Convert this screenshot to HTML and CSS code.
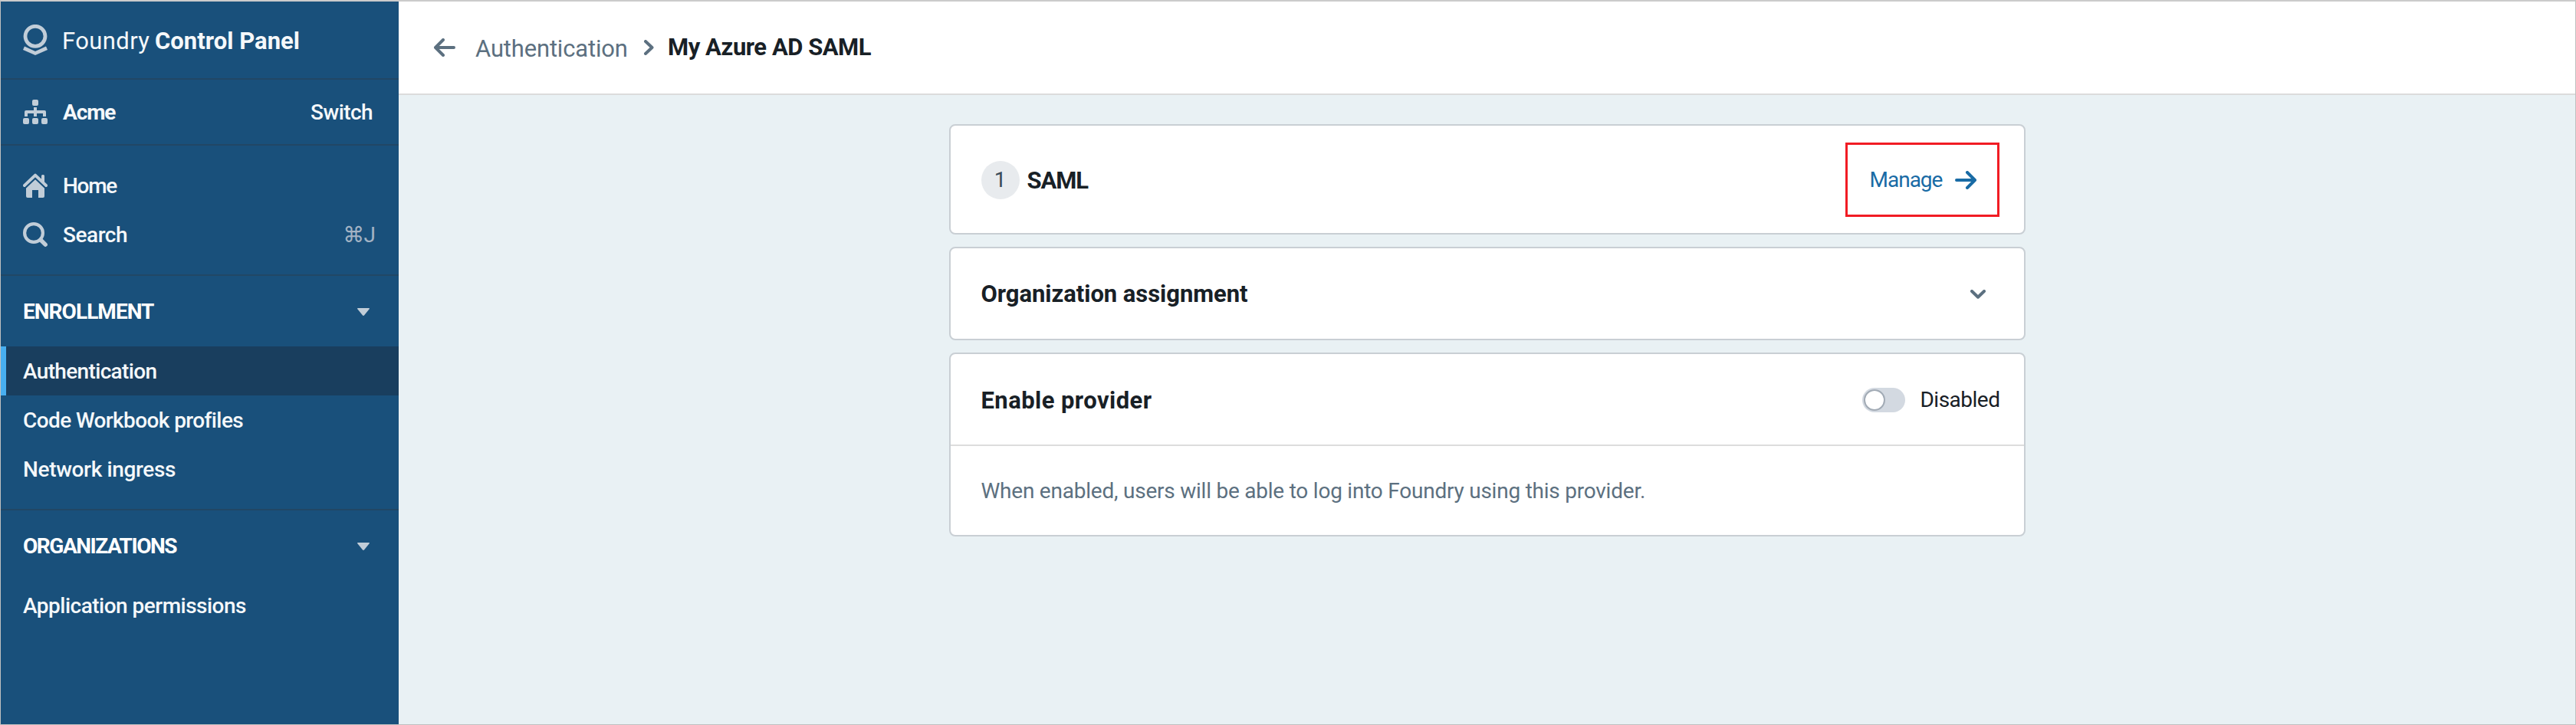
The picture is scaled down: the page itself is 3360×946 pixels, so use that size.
FILE: index.html
```
<!DOCTYPE html>
<html lang="en">
<head>
<meta charset="utf-8">
<title>Foundry Control Panel</title>
<link rel="stylesheet" href="styles.css">
</head>
<body>
<div class="app">
  <aside class="sidebar">
    <div class="brand">
      <svg class="logo" width="32" height="40" viewBox="0 0 32 40"><circle cx="16" cy="15.3" r="13" fill="none" stroke="currentColor" stroke-width="4.8"/><path fill="currentColor" d="M2 28.5 16 35l14-6.500 2 4.500-16 7-16-7z"/></svg>
      <span class="brand-name"><span class="brand-light">Foundry</span><b class="brand-bold">Control Panel</b></span>
    </div>
    <div class="org">
      <svg class="icon" width="32" height="32" viewBox="0 0 32 32"><g fill="currentColor"><rect x="12" width="8" height="8" rx="2"/><rect y="24" width="8" height="8" rx="2"/><rect x="12" y="24" width="8" height="8" rx="2"/><rect x="24" y="24" width="8" height="8" rx="2"/><path d="M14 10h4v4h10a2 2 0 0 1 2 2v6h-4v-4h-8v4h-4v-4H6v4H2v-6a2 2 0 0 1 2-2h10z"/></g></svg>
      <b class="org-name">Acme</b>
      <span class="switch-link">Switch</span>
    </div>
    <nav class="quick">
      <a class="quick-row">
        <svg class="icon" width="32" height="32" viewBox="0 0 32 32"><path d="M2 16 16 2.600 30 16" fill="none" stroke="currentColor" stroke-width="4" stroke-linecap="round" stroke-linejoin="round"/><path fill="currentColor" d="M24 9V3.500a1.500 1.500 0 0 1 1.500-1.500h1A1.500 1.500 0 0 1 28 3.500V13zM16 8l12 11.500V30a2 2 0 0 1-2 2h-6V22h-8v10H6a2 2 0 0 1-2-2V19.500z"/><path d="M3 19.200 16 6.800l13 12.400" fill="none" stroke="#19507b" stroke-width="1.600"/></svg>
        <span class="home">Home</span>
      </a>
      <a class="quick-row">
        <svg class="icon" width="32" height="32" viewBox="0 0 32 32"><g fill="none" stroke="currentColor"><circle cx="14" cy="14" r="11.900" stroke-width="4.200"/><path d="m23 23 6.200 6.200" stroke-width="5.400" stroke-linecap="round"/></g></svg>
        <span class="search">Search</span>
        <span class="hotkey"><span class="cmd">⌘</span>J</span>
      </a>
    </nav>
    <section class="group">
      <h2 class="group-head"><span class="t-enrollment">ENROLLMENT</span><svg class="caret" width="16" height="10" viewBox="0 0 16 10"><path fill="currentColor" d="M.8 0h14.400q1.200.3.500 1.300L9.200 9.300Q8 10.600 6.800 9.300L.3 1.300Q-.4.300.8 0z"/></svg></h2>
      <a class="item active"><span class="t-auth">Authentication</span></a>
      <a class="item"><span class="t-code">Code Workbook profiles</span></a>
      <a class="item"><span class="t-net">Network ingress</span></a>
    </section>
    <section class="group">
      <h2 class="group-head"><span class="t-orgs">ORGANIZATIONS</span><svg class="caret" width="16" height="10" viewBox="0 0 16 10"><path fill="currentColor" d="M.8 0h14.400q1.200.3.500 1.300L9.200 9.300Q8 10.600 6.800 9.300L.3 1.300Q-.4.300.8 0z"/></svg></h2>
      <a class="item"><span class="t-app">Application permissions</span></a>
    </section>
  </aside>
  <div class="main">
    <header class="topbar">
      <svg class="back" width="28" height="24" viewBox="0 0 28 24"><path d="M12 2 2 12l10 10M2.500 12H26" fill="none" stroke="currentColor" stroke-width="4" stroke-linecap="round" stroke-linejoin="round"/></svg>
      <a class="crumb">Authentication</a>
      <svg class="crumb-sep" width="13" height="20" viewBox="0 0 13 20"><path d="m2 2 8.500 8L2 18" fill="none" stroke="currentColor" stroke-width="4" stroke-linecap="round" stroke-linejoin="round"/></svg>
      <h1 class="crumb-current">My Azure AD SAML</h1>
    </header>
    <main class="content">
      <section class="card card-saml">
        <span class="step">1</span>
        <h3 class="title t-saml">SAML</h3>
        <a class="manage"><span class="t-manage">Manage</span><svg width="28" height="24" viewBox="0 0 28 24"><path d="m16 2 10 10-10 10M25.500 12H2" fill="none" stroke="currentColor" stroke-width="4" stroke-linecap="round" stroke-linejoin="round"/></svg></a>
      </section>
      <section class="card card-org">
        <h3 class="title t-assign">Organization assignment</h3>
        <svg class="chevron" width="20" height="12" viewBox="0 0 20 12"><path d="m2 2 8 7.700L18 2" fill="none" stroke="currentColor" stroke-width="4" stroke-linecap="round" stroke-linejoin="round"/></svg>
      </section>
      <section class="card">
        <div class="provider-head">
          <h3 class="title t-enable">Enable provider</h3>
          <span class="toggle"><span class="knob"></span></span>
          <span class="toggle-label">Disabled</span>
        </div>
        <p class="provider-text">When enabled, users will be able to log into Foundry using this provider.</p>
      </section>
    </main>
  </div>
</div>
</body>
</html>
```
FILE: styles.css
```
* { box-sizing: border-box; }
body { margin: 0; font-family: Roboto, "Liberation Sans", sans-serif; font-size: 28px; line-height: 32px; white-space: nowrap; }
h1, h2, h3, p { margin: 0; }
svg { display: block; flex: none; }

.app { display: flex; height: 946px; border: 1px solid #c0c0c0; border-top: 2px solid #cbcbcb; }

.sidebar { width: 519px; flex: none; background: #19507b; color: #f5f8fa; font-weight: 500; }
.brand, .org { display: flex; align-items: center; padding: 0 34px 0 29px; border-bottom: 2px solid #214765; }
.brand { height: 102px; }
.org { height: 86px; }
.logo, .icon, .caret { color: #c1cdd8; }
.brand-name { display: flex; margin-left: 19px; padding-top: 3px; font-size: 31px; }
.brand-light { width: 121px; font-weight: 400; letter-spacing: .39px; }
.brand-bold { letter-spacing: .03px; }
.org-name { margin-left: 20px; letter-spacing: -1.1px; }
.switch-link { margin-left: auto; letter-spacing: -.57px; }
.org-name, .switch-link, .home, .search, .hotkey, .item span, .group-head span { padding-top: 2px; }
.quick { height: 170px; padding: 20px 0; border-bottom: 2px solid #214765; }
.quick-row { display: flex; align-items: center; height: 64px; padding: 0 29px; }
.home, .search { margin-left: 20px; }
.home { letter-spacing: -1.3px; }
.search { letter-spacing: -.47px; }
.hotkey { display: flex; align-items: center; gap: 3px; margin-left: auto; margin-right: 1px; color: #a3b3c4; font-weight: 400; }
.cmd { font-family: "DejaVu Sans", sans-serif; font-size: 28px; letter-spacing: -4px; }

.group { padding-bottom: 20px; border-bottom: 2px solid #214765; }
.group:last-child { border-bottom: 0; }
.group-head { display: flex; align-items: center; justify-content: space-between; height: 92px; padding: 0 38px 0 29px; font-size: 28px; font-weight: 700; color: #fff; }
.caret { margin-top: 2px; }
.item { display: flex; align-items: center; height: 64px; padding-left: 29px; }
.item.active { padding-left: 22px; border-left: 7px solid #48aff0; background: #193e5e; }
.t-enrollment { letter-spacing: -.95px; }
.t-orgs { letter-spacing: -1.48px; }
.t-auth { letter-spacing: -.66px; }
.t-code { letter-spacing: -.6px; }
.t-net { letter-spacing: -.35px; }
.t-app { letter-spacing: -.51px; }

.main { flex: 1; background: #e9f1f4; }
.topbar { display: flex; align-items: center; height: 122px; padding-left: 46px; background: #fff; border-bottom: 2px solid #dcdcdc; color: #5c7080; font-size: 31px; }
.crumb { margin-left: 26px; padding-top: 3px; width: 220px; letter-spacing: -.17px; }
.crumb-current { margin-left: 18px; font-size: 31px; font-weight: 700; letter-spacing: -.47px; color: #182026; }

.content { display: flex; flex-direction: column; gap: 16px; width: 1404px; margin: 38px auto 0; }
.card { background: #fff; border: 2px solid #c9cfd4; border-radius: 8px; }
.card-saml, .card-org { display: flex; align-items: center; padding-left: 40px; }
.card-saml { height: 144px; padding-top: 1px; }
.card-org { height: 122px; }
.title { padding-top: 2px; font-size: 31px; font-weight: 700; color: #182026; }
.step { width: 50px; height: 50px; border-radius: 50%; background: #e8ebee; color: #394b59; text-align: center; line-height: 50px; }
.t-saml { margin-left: 10px; letter-spacing: -1.11px; }
.manage { display: flex; align-items: center; justify-content: space-between; width: 201px; height: 97px; margin: 0 32px 0 auto; padding: 0 27px 0 29px; border: 3px solid #f11c24; color: #196ba5; }
.t-manage { padding-top: 1px; letter-spacing: -1px; }
.t-assign { letter-spacing: -.05px; }
.chevron { margin: 2px 50px 0 auto; color: #5c7080; }
.provider-head { display: flex; align-items: center; height: 120px; padding: 2px 31px 0 40px; border-bottom: 2px solid #dcdcdc; }
.t-enable { letter-spacing: .43px; }
.toggle { width: 56px; height: 32px; margin-left: auto; padding: 2px; border-radius: 16px; background: #d3d9e1; }
.knob { display: block; width: 28px; height: 28px; border: 2px solid #a2abb5; border-radius: 50%; background: #fff; background-clip: padding-box; }
.toggle-label { margin-left: 19px; letter-spacing: -.5px; color: #182026; }
.provider-text { height: 116px; padding-left: 40px; line-height: 118px; letter-spacing: -.23px; color: #5c7080; }
```
